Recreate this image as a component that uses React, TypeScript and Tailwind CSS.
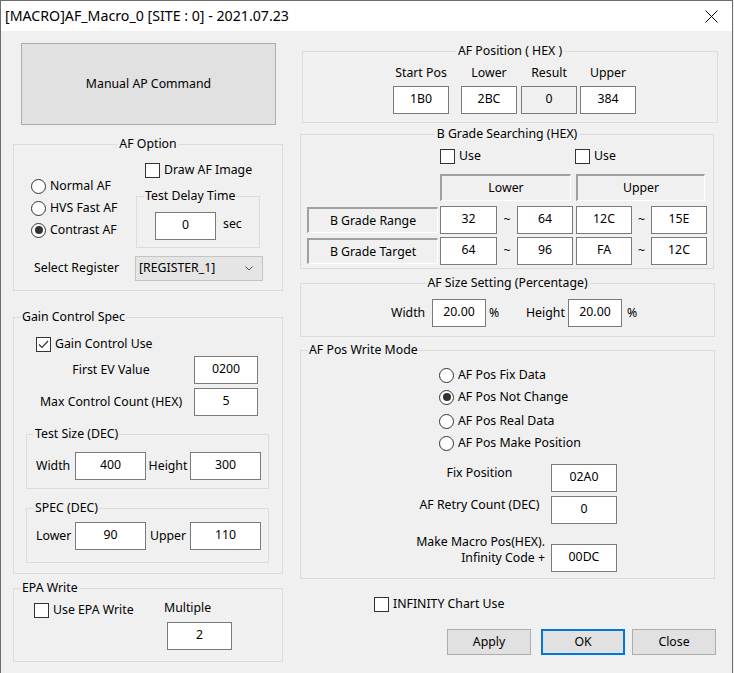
import React from "react";

type GP = { title: string; center?: boolean; className?: string; children?: React.ReactNode };

function Group({ title, center, className = "", children }: GP) {
  return (
    <div className={`relative border border-[#dcdcdc] ${className}`}>
      <span
        className={
          center
            ? "absolute left-1/2 top-[-9px] -translate-x-1/2 whitespace-nowrap bg-[#f0f0f0] px-[2px] leading-[16px]"
            : "absolute left-[7px] top-[-9px] whitespace-nowrap bg-[#f0f0f0] px-[1px] leading-[16px]"
        }
      >
        {title}
      </span>
      {children}
    </div>
  );
}

function Edit({ v, className = "", gray }: { v: string; className?: string; gray?: boolean }) {
  return (
    <div
      className={`flex h-[28px] shrink-0 items-center justify-center border border-[#7a7a7a] pb-[3px] leading-[16px] ${
        gray ? "bg-[#f0f0f0]" : "bg-white"
      } ${className}`}
    >
      {v}
    </div>
  );
}

function Check({ checked }: { checked?: boolean }) {
  return (
    <span className="flex h-[15px] w-[15px] shrink-0 items-center justify-center border border-[#333333] bg-white">
      {checked && (
        <svg width="13" height="13" viewBox="0 0 13 13">
          <path d="M2 6.5 L5 9.5 L11 3" fill="none" stroke="#333333" strokeWidth="1.2" />
        </svg>
      )}
    </span>
  );
}

function Radio({ on }: { on?: boolean }) {
  return (
    <span className="flex h-[15px] w-[15px] shrink-0 items-center justify-center rounded-full border border-[#333333] bg-white">
      {on && <span className="h-[8px] w-[8px] rounded-full bg-[#333333]" />}
    </span>
  );
}

function Sunken({ children, className = "" }: { children: React.ReactNode; className?: string }) {
  return (
    <div
      className={`flex shrink-0 items-center justify-center border-b border-l-2 border-r border-t-2 border-b-white border-l-[#a0a0a0] border-r-white border-t-[#a0a0a0] bg-[#f0f0f0] leading-[16px] ${className}`}
    >
      {children}
    </div>
  );
}

function Btn({ children, className = "" }: { children: React.ReactNode; className?: string }) {
  return (
    <div className={`flex h-[26px] shrink-0 items-center justify-center bg-[#e1e1e1] leading-[16px] ${className}`}>
      {children}
    </div>
  );
}

export default function App() {
  return (
    <div className="h-[673px] w-[734px] bg-[#f0f0f0] font-['Noto_Sans',sans-serif] text-[12.3px] text-black">
      <div className="flex h-[673px] w-[733px] flex-col border-l border-r border-t border-[#6e6e6e] bg-[#f0f0f0]">
        {/* title bar */}
        <div className="flex h-[30px] shrink-0 items-center justify-between bg-white pl-[4px] pr-[14px]">
          <span className="text-[14.2px] leading-[18px]">[MACRO]AF_Macro_0 [SITE : 0] - 2021.07.23</span>
          <svg width="13" height="13" viewBox="0 0 13 13">
            <path d="M0.5 0.5 L12.5 12.5 M12.5 0.5 L0.5 12.5" stroke="#000" strokeWidth="1" />
          </svg>
        </div>

        {/* body */}
        <div className="flex items-start">
          {/* left column */}
          <div className="ml-[12px] flex w-[270px] shrink-0 flex-col">
            <div className="ml-[8px] mt-[12px] flex h-[82px] w-[255px] items-center justify-center border border-[#adadad] bg-[#e1e1e1]">
              Manual AP Command
            </div>

            <Group title="AF Option" center className="mt-[19px] h-[147px] w-[270px]">
              <div className="flex">
                <div className="ml-[17px] mt-[31px] flex w-[105px] shrink-0 flex-col">
                  <div className="flex h-[21px] items-center gap-[4px]">
                    <Radio />
                    <span>Normal AF</span>
                  </div>
                  <div className="flex h-[22px] items-center gap-[4px]">
                    <Radio />
                    <span>HVS Fast AF</span>
                  </div>
                  <div className="flex h-[22px] items-center gap-[4px]">
                    <Radio on />
                    <span>Contrast AF</span>
                  </div>
                </div>
                <div className="flex flex-col">
                  <div className="ml-[9px] mt-[18px] flex h-[15px] items-center gap-[4px]">
                    <Check />
                    <span>Draw AF Image</span>
                  </div>
                  <Group title="Test Delay Time" className="mt-[18px] h-[52px] w-[124px]">
                    <div className="ml-[18px] mt-[15px] flex items-center">
                      <Edit v="0" className="w-[61px]" />
                      <span className="ml-[7px] pb-[3px]">sec</span>
                    </div>
                  </Group>
                </div>
              </div>
              <div className="mt-[8px] flex items-center">
                <span className="ml-[20px] w-[101px]">Select Register</span>
                <div className="flex h-[25px] w-[128px] items-center justify-between border border-[#c4c4c4] bg-[#e5e5e5] pl-[3px] pr-[9px]">
                  <span>[REGISTER_1]</span>
                  <svg width="8" height="5" viewBox="0 0 8 5">
                    <path d="M0.5 0.5 L4 4 L7.5 0.5" fill="none" stroke="#555" strokeWidth="1" />
                  </svg>
                </div>
              </div>
            </Group>

            <Group title="Gain Control Spec" className="mt-[26px] h-[257px] w-[270px]">
              <div className="ml-[22px] mt-[19px] flex h-[15px] items-center gap-[4px]">
                <Check checked />
                <span>Gain Control Use</span>
              </div>
              <div className="mt-[4px] flex h-[28px] items-center">
                <span className="ml-[17px] w-[160px] text-center">First EV Value</span>
                <Edit v="0200" className="ml-[3px] w-[64px]" />
              </div>
              <div className="mt-[4px] flex h-[28px] items-center">
                <span className="ml-[17px] w-[160px] text-center">Max Control Count (HEX)</span>
                <Edit v="5" className="ml-[3px] w-[64px]" />
              </div>
              <Group title="Test Size (DEC)" className="ml-[12px] mt-[18px] h-[55px] w-[243px]">
                <div className="ml-[9px] mt-[17px] flex items-center">
                  <span className="w-[39px]">Width</span>
                  <Edit v="400" className="w-[71px]" />
                  <span className="w-[44px] text-center">Height</span>
                  <Edit v="300" className="w-[71px]" />
                </div>
              </Group>
              <Group title="SPEC (DEC)" className="ml-[12px] mt-[19px] h-[55px] w-[243px]">
                <div className="ml-[9px] mt-[13px] flex items-center">
                  <span className="w-[39px]">Lower</span>
                  <Edit v="90" className="w-[71px]" />
                  <span className="w-[44px] text-center">Upper</span>
                  <Edit v="110" className="w-[71px]" />
                </div>
              </Group>
            </Group>

            <Group title="EPA Write" className="mt-[14px] h-[74px] w-[270px]">
              <div className="flex">
                <div className="ml-[20px] mt-[14px] flex h-[15px] w-[130px] items-center gap-[4px]">
                  <Check />
                  <span>Use EPA Write</span>
                </div>
                <div className="flex flex-col">
                  <span className="mt-[11px] leading-[16px]">Multiple</span>
                  <Edit v="2" className="ml-[3px] mt-[6px] w-[65px]" />
                </div>
              </div>
            </Group>
          </div>

          {/* right column */}
          <div className="ml-[17px] flex w-[417px] shrink-0 flex-col">
            <Group title="AF Position ( HEX )" center className="ml-[2px] mt-[20px] h-[72px] w-[416px]">
              <div className="flex pl-[90px] pt-[13px]">
                <div className="flex w-[56px] flex-col items-center">
                  <span className="whitespace-nowrap leading-[16px]">Start Pos</span>
                  <Edit v="1B0" className="mt-[5px] w-[56px]" />
                </div>
                <div className="ml-[12px] flex w-[56px] flex-col items-center">
                  <span className="leading-[16px]">Lower</span>
                  <Edit v="2BC" className="mt-[5px] w-[56px]" />
                </div>
                <div className="ml-[4px] flex w-[56px] flex-col items-center">
                  <span className="leading-[16px]">Result</span>
                  <Edit v="0" gray className="mt-[5px] w-[56px]" />
                </div>
                <div className="ml-[3px] flex w-[56px] flex-col items-center">
                  <span className="leading-[16px]">Upper</span>
                  <Edit v="384" className="mt-[5px] w-[56px]" />
                </div>
              </div>
            </Group>

            <Group title="B Grade Searching (HEX)" center className="mt-[11px] h-[135px] w-[414px]">
              <div className="ml-[139px] mt-[14px] flex h-[15px] items-center">
                <div className="flex w-[135px] items-center gap-[4px]">
                  <Check />
                  <span>Use</span>
                </div>
                <div className="flex items-center gap-[4px]">
                  <Check />
                  <span>Use</span>
                </div>
              </div>
              <div className="ml-[139px] mt-[10px] flex">
                <Sunken className="h-[27px] w-[131px]">Lower</Sunken>
                <Sunken className="ml-[5px] h-[27px] w-[129px]">Upper</Sunken>
              </div>
              <div className="mt-[5px] flex items-center">
                <Sunken className="ml-[6px] h-[26px] w-[131px]">B Grade Range</Sunken>
                <Edit v="32" className="ml-[2px] w-[57px]" />
                <span className="w-[20px] text-center">~</span>
                <Edit v="64" className="w-[56px]" />
                <Edit v="12C" className="ml-[3px] w-[56px]" />
                <span className="w-[19px] text-center">~</span>
                <Edit v="15E" className="w-[56px]" />
              </div>
              <div className="mt-[3px] flex items-center">
                <Sunken className="ml-[6px] h-[26px] w-[131px]">B Grade Target</Sunken>
                <Edit v="64" className="ml-[2px] w-[57px]" />
                <span className="w-[20px] text-center">~</span>
                <Edit v="96" className="w-[56px]" />
                <Edit v="FA" className="ml-[3px] w-[56px]" />
                <span className="w-[19px] text-center">~</span>
                <Edit v="12C" className="w-[56px]" />
              </div>
            </Group>

            <Group title="AF Size Setting (Percentage)" center className="mt-[14px] h-[54px] w-[415px]">
              <div className="flex items-center pl-[90px] pt-[15px]">
                <span className="w-[41px]">Width</span>
                <Edit v="20.00" className="w-[54px]" />
                <span className="w-[40px] pl-[3px]">%</span>
                <span className="w-[42px]">Height</span>
                <Edit v="20.00" className="w-[54px]" />
                <span className="pl-[5px]">%</span>
              </div>
            </Group>

            <Group title="AF Pos Write Mode" className="mt-[13px] h-[229px] w-[415px]">
              <div className="ml-[138px] mt-[13px] flex flex-col">
                <div className="flex h-[22px] items-center gap-[4px]">
                  <Radio />
                  <span>AF Pos Fix Data</span>
                </div>
                <div className="flex h-[22px] items-center gap-[4px]">
                  <Radio on />
                  <span>AF Pos Not Change</span>
                </div>
                <div className="mt-[2px] flex h-[22px] items-center gap-[4px]">
                  <Radio />
                  <span>AF Pos Real Data</span>
                </div>
                <div className="flex h-[22px] items-center gap-[4px]">
                  <Radio />
                  <span>AF Pos Make Position</span>
                </div>
              </div>
              <div className="mt-[10px] flex items-start">
                <span className="ml-[113px] w-[131px] pt-[1px] text-center leading-[16px]">Fix Position</span>
                <Edit v="02A0" className="ml-[6px] w-[66px]" />
              </div>
              <div className="mt-[4px] flex items-start">
                <span className="ml-[113px] w-[131px] pt-[1px] text-center leading-[16px]">AF Retry Count (DEC)</span>
                <Edit v="0" className="ml-[6px] w-[66px]" />
              </div>
              <div className="mt-[10px] flex h-[38px] items-end">
                <div className="mb-[6px] ml-[113px] flex w-[131px] flex-col items-end leading-[16px]">
                  <span className="whitespace-nowrap">Make Macro Pos(HEX).</span>
                  <span className="whitespace-nowrap">Infinity Code +</span>
                </div>
                <Edit v="00DC" className="ml-[6px] w-[66px]" />
              </div>
            </Group>

            <div className="ml-[74px] mt-[18px] flex h-[15px] items-center gap-[4px]">
              <Check />
              <span>INFINITY Chart Use</span>
            </div>

            <div className="ml-[147px] mt-[17px] flex">
              <Btn className="w-[84px] border border-[#adadad]">Apply</Btn>
              <Btn className="ml-[10px] w-[84px] border-2 border-[#0078d7]">OK</Btn>
              <Btn className="ml-[7px] w-[84px] border border-[#adadad]">Close</Btn>
            </div>
          </div>
        </div>
      </div>
    </div>
  );
}
